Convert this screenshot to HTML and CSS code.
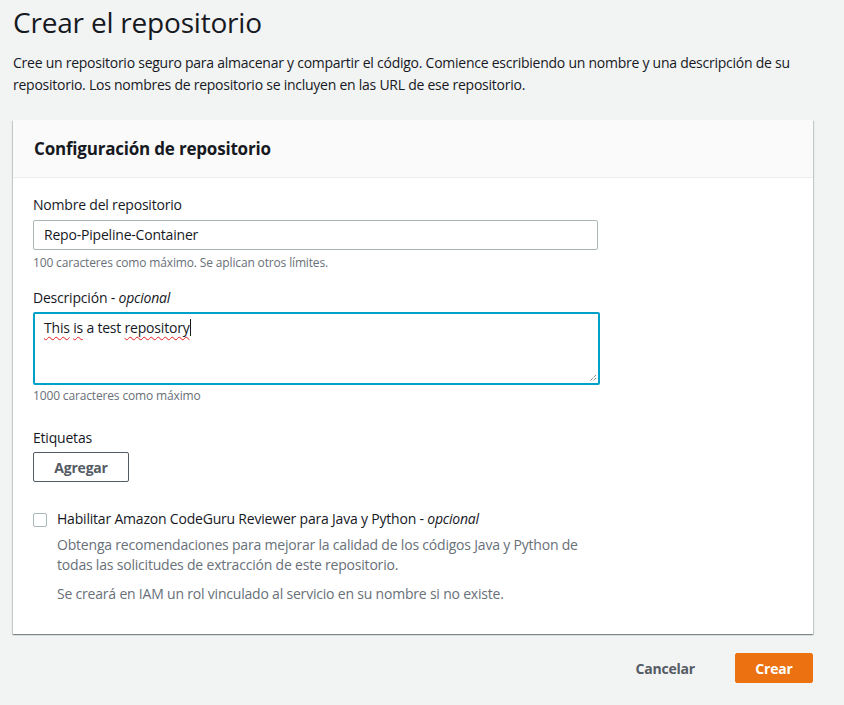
FILE: index.html
```html
<!DOCTYPE html>
<html lang="es">
<head>
<meta charset="utf-8">
<title>Crear el repositorio</title>
<link rel="stylesheet" href="styles.css">
</head>
<body>
<div class="page">
  <h1 class="title">Crear el repositorio</h1>
  <p class="intro">Cree un repositorio seguro para almacenar y compartir el código. Comience escribiendo un nombre y una descripción de su repositorio. Los nombres de repositorio se incluyen en las URL de ese repositorio.</p>

  <div class="card">
    <div class="card-header">
      <h2>Configuración de repositorio</h2>
    </div>
    <div class="card-body">
      <div class="field">
        <div class="label">Nombre del repositorio</div>
        <div class="input">Repo-Pipeline-Container</div>
        <div class="hint">100 caracteres como máximo. Se aplican otros límites.</div>
      </div>
      <div class="field">
        <div class="label">Descripción - <i>opcional</i></div>
        <div class="textarea"><span class="sp">This</span> <span class="sp">is</span> a test <span class="sp">repository</span><span class="caret"></span>
          <svg class="grip" width="8" height="8" viewBox="0 0 8 8"><path d="M7 1 L1 7 M7 4 L4 7" stroke="#555" stroke-width="1" stroke-dasharray="1 1"/></svg>
        </div>
        <div class="hint">1000 caracteres como máximo</div>
      </div>
      <div class="field tags">
        <div class="label">Etiquetas</div>
        <button class="btn-normal">Agregar</button>
      </div>
      <div class="check-row">
        <span class="checkbox"></span>
        <div class="check-text">
          <div class="check-label">Habilitar Amazon CodeGuru Reviewer para Java y Python - <i>opcional</i></div>
          <p class="check-desc">Obtenga recomendaciones para mejorar la calidad de los códigos Java y Python de todas las solicitudes de extracción de este repositorio.</p>
          <p class="check-desc">Se creará en IAM un rol vinculado al servicio en su nombre si no existe.</p>
        </div>
      </div>
    </div>
  </div>

  <div class="actions">
    <button class="btn-link">Cancelar</button>
    <button class="btn-primary">Crear</button>
  </div>
</div>
</body>
</html>
```

FILE: styles.css
```css
html, body {
  margin: 0;
  padding: 0;
  background: #f2f3f3;
}
body {
  font-family: "Open Sans", "Noto Sans", Arial, sans-serif;
  color: #16191f;
  font-size: 14px;
}
.page {
  padding: 0 31px 0 13px;
}
.title {
  margin: 0;
  padding-top: 2px;
  font-size: 28px;
  font-weight: 400;
  line-height: 40px;
  letter-spacing: -0.2px;
}
.intro {
  margin: 10px 0 0;
  line-height: 22px;
  font-size: 14px;
  letter-spacing: -0.25px;
}
.card {
  margin-top: 24px;
  background: #fff;
  box-shadow: 0 1px 1px 0 rgba(0,28,36,.3), 1px 1px 1px 0 rgba(0,28,36,.15), -1px 1px 1px 0 rgba(0,28,36,.15);
}
.card-header {
  background: #fafafa;
  border-bottom: 1px solid #eaeded;
  height: 57px;
  display: flex;
  align-items: center;
  padding: 0 21px;
}
.card-header h2 {
  margin: 0;
  font-size: 17px;
  font-weight: 700;
  letter-spacing: -0.2px;
}
.card-body {
  padding: 16px 20px 30px;
}
.field {
  margin-bottom: 15px;
}
.label {
  line-height: 22px;
  margin-bottom: 4px;
  letter-spacing: -0.2px;
}
.input {
  width: 543px;
  height: 28px;
  border: 1px solid #aab7b8;
  border-radius: 2px;
  padding: 0 10px;
  line-height: 28px;
  letter-spacing: -0.2px;
}
.hint {
  font-size: 12px;
  color: #687078;
  line-height: 18px;
  margin-top: 4px;
  letter-spacing: -0.15px;
}
.textarea {
  position: relative;
  width: 545px;
  height: 67px;
  border: 2px solid #00a1c9;
  border-radius: 2px;
  padding: 2px 9px 0;
  line-height: 24px;
  letter-spacing: -0.2px;
}
.field .label + .textarea {
  margin-top: -1px;
}
.textarea + .hint {
  margin-top: 2px;
}
.sp {
  text-decoration: underline wavy #e02020;
  text-decoration-thickness: 1px;
  text-underline-offset: 3px;
}
.caret {
  display: inline-block;
  width: 1px;
  height: 17px;
  background: #16191f;
  vertical-align: -3px;
}
.grip {
  position: absolute;
  right: 1px;
  bottom: 1px;
}
.tags {
  margin-top: 22px;
  margin-bottom: 26px;
}
.tags .label {
  margin-bottom: 3px;
}
.btn-normal {
  font-family: inherit;
  font-size: 14px;
  font-weight: 700;
  color: #545b64;
  background: #fff;
  border: 1px solid #545b64;
  border-radius: 2px;
  width: 96px;
  height: 30px;
  padding: 0;
  letter-spacing: -0.2px;
}
.check-row {
  display: flex;
  gap: 10px;
}
.checkbox {
  width: 12px;
  height: 12px;
  border: 1px solid #aab7b8;
  border-radius: 2px;
  margin-top: 5px;
  flex: none;
}
.check-label {
  line-height: 22px;
  letter-spacing: -0.2px;
}
.check-desc {
  margin: 5px 0 0;
  color: #687078;
  line-height: 20px;
  letter-spacing: -0.2px;
}
.check-desc + .check-desc {
  margin-top: 9px;
}
.check-text {
  max-width: 535px;
}
.actions {
  display: flex;
  justify-content: flex-end;
  align-items: center;
  gap: 40px;
  margin-top: 19px;
}
.btn-link {
  font-family: inherit;
  font-size: 14px;
  font-weight: 700;
  color: #545b64;
  background: none;
  border: none;
  padding: 0;
  letter-spacing: -0.2px;
}
.btn-primary {
  font-family: inherit;
  font-size: 14px;
  font-weight: 700;
  color: #fff;
  background: #ec7211;
  border: 1px solid #ec7211;
  border-radius: 2px;
  width: 78px;
  height: 30px;
  padding: 0;
  letter-spacing: -0.2px;
}
```
